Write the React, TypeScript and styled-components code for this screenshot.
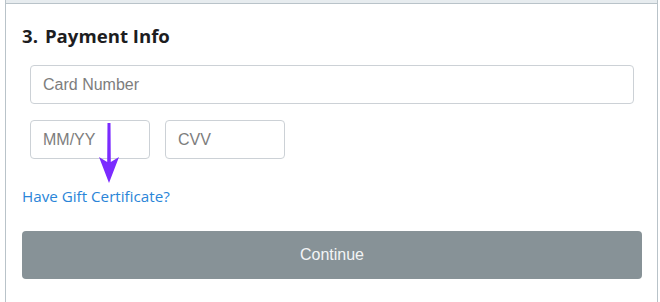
import React from "react";
import styled, { createGlobalStyle } from "styled-components";

const GlobalStyle = createGlobalStyle`
  html, body {
    margin: 0;
    padding: 0;
    background: #ffffff;
  }
  body {
    font-family: "Liberation Sans", Arial, sans-serif;
  }
`;

const Page = styled.div`
  width: 660px;
  height: 302px;
  padding: 0 2px 0 5px;
  box-sizing: border-box;
  overflow: hidden;
`;

const Card = styled.section`
  position: relative;
  border-left: 1px solid #b9c3c9;
  border-right: 1px solid #b9c3c9;
  height: 302px;
  box-sizing: border-box;
`;

const TopStrip = styled.div`
  height: 3px;
  background: #e7ecef;
  border-bottom: 1px solid #b9c3c9;
`;

const Body = styled.div`
  padding: 20px 15px 0 16px;
  display: flex;
  flex-direction: column;
`;

const Title = styled.h2`
  margin: 0;
  font-family: "Open Sans", Lato, sans-serif;
  font-size: 18.6px;
  font-weight: 700;
  color: #1d1d1f;
  line-height: 24px;
  display: flex;
  gap: 7px;
`;

const Fields = styled.div`
  margin: 17px 8px 0;
  display: flex;
  flex-direction: column;
  gap: 16px;
`;

const Row = styled.div`
  display: flex;
  gap: 15px;
`;

const Input = styled.input<{ $w?: number }>`
  box-sizing: border-box;
  width: ${({ $w }) => ($w ? `${$w}px` : "100%")};
  height: 39px;
  border: 1px solid #ccd1d6;
  border-radius: 4px;
  padding: 0 12px;
  font-family: "Liberation Sans", Arial, sans-serif;
  font-size: 16px;
  color: #333;
  outline: none;
  &::placeholder {
    color: #7d7d7d;
  }
`;

const GiftLink = styled.a`
  margin-top: 28px;
  font-family: "Open Sans", Lato, sans-serif;
  font-size: 15.2px;
  color: #2a85d8;
  text-decoration: none;
  line-height: 19px;
  align-self: flex-start;
`;

const ContinueButton = styled.button`
  margin-top: 25px;
  height: 48px;
  width: 100%;
  border: none;
  border-radius: 4px;
  background: #879297;
  color: #f3f5f6;
  font-family: "Liberation Sans", Arial, sans-serif;
  font-size: 16px;
`;

const Arrow = styled.svg`
  position: absolute;
  left: 92px;
  top: 122px;
`;

export default function App() {
  return (
    <>
      <GlobalStyle />
      <Page>
        <Card>
          <TopStrip />
          <Body>
            <Title>
              <span>3.</span>
              <span>Payment Info</span>
            </Title>
            <Fields>
              <Input placeholder="Card Number" />
              <Row>
                <Input $w={120} placeholder="MM/YY" />
                <Input $w={120} placeholder="CVV" />
              </Row>
            </Fields>
            <GiftLink href="#">Have Gift Certificate?</GiftLink>
            <ContinueButton>Continue</ContinueButton>
          </Body>
          <Arrow width="22" height="62" viewBox="0 0 22 62">
            <path d="M9.5 1 L12.5 1 L12.8 40 L21 35 L11 61 L1 35 L9.2 40 Z" fill="#7b2bff" />
          </Arrow>
        </Card>
      </Page>
    </>
  );
}
